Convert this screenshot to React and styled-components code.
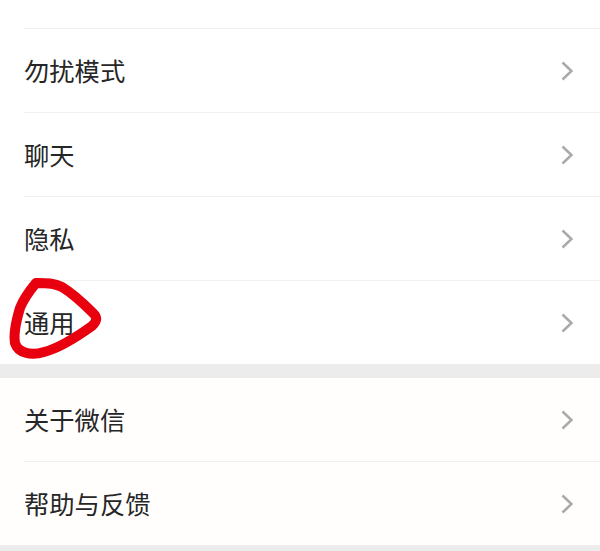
import React from "react"
import styled, { createGlobalStyle } from "styled-components"

const GlobalStyle = createGlobalStyle`
  html, body {
    margin: 0;
    padding: 0;
    background: #fff;
  }
`

const Page = styled.div`
  position: relative;
  width: 600px;
  height: 551px;
  overflow: hidden;
  background: #ececec;
  font-family: "Noto Sans CJK SC", "Liberation Sans", sans-serif;
`

const Group = styled.div`
  background: ${props => props.$tint || "#fff"};
`

const TopStub = styled.div`
  height: 29px;
  margin-left: 24px;
  border-bottom: 1px solid #f0f0f0;
  box-sizing: border-box;
`

const Row = styled.div`
  display: flex;
  align-items: center;
  justify-content: space-between;
  box-sizing: border-box;
  height: ${props => props.$last ? "83px" : "84px"};
  margin-left: 24px;
  padding-right: 27px;
  border-bottom: ${props => props.$last ? "none" : "1px solid #f0f0f0"};
`

const Label = styled.span`
  font-size: 25.3px;
  line-height: 1;
  color: #262626;
`

const Chevron = styled.svg`
  width: 12px;
  height: 20px;
  fill: none;
  stroke: #aaaaaa;
  stroke-width: 2.6;
`

const Gap = styled.div`
  height: 14px;
`

const Circle = styled.svg`
  position: absolute;
  left: 0;
  top: 260px;
  width: 110px;
  height: 110px;
  fill: none;
  stroke: #e8000f;
  stroke-width: 10;
  stroke-linecap: round;
  stroke-linejoin: round;
`

const firstGroup = ["勿扰模式", "聊天", "隐私", "通用"]
const secondGroup = ["关于微信", "帮助与反馈"]

function SettingRow({ label, last }) {
  return (
    <Row $last={last}>
      <Label>{label}</Label>
      <Chevron viewBox="0 0 12 20">
        <path d="M1.5 1.5 L10.5 10 L1.5 18.5" />
      </Chevron>
    </Row>
  )
}

export default function App() {
  return (
    <Page>
      <GlobalStyle />
      <Group>
        <TopStub />
        {firstGroup.map((label, i) => (
          <SettingRow key={label} label={label} last={i === firstGroup.length - 1} />
        ))}
      </Group>
      <Gap />
      <Group $tint="#fffefd">
        {secondGroup.map((label, i) => (
          <SettingRow key={label} label={label} last={i === secondGroup.length - 1} />
        ))}
      </Group>
      <Circle viewBox="0 0 110 110">
        <path d="M36 23 C31 29 24 38 20 48 C17 58 13 72 15 83 C18 93 31 96 44 92 C60 88 78 76 92 66 C98 60 97 57 93 53 C84 44 72 33 62 27 C54 23 46 23 38 23" />
      </Circle>
    </Page>
  )
}
